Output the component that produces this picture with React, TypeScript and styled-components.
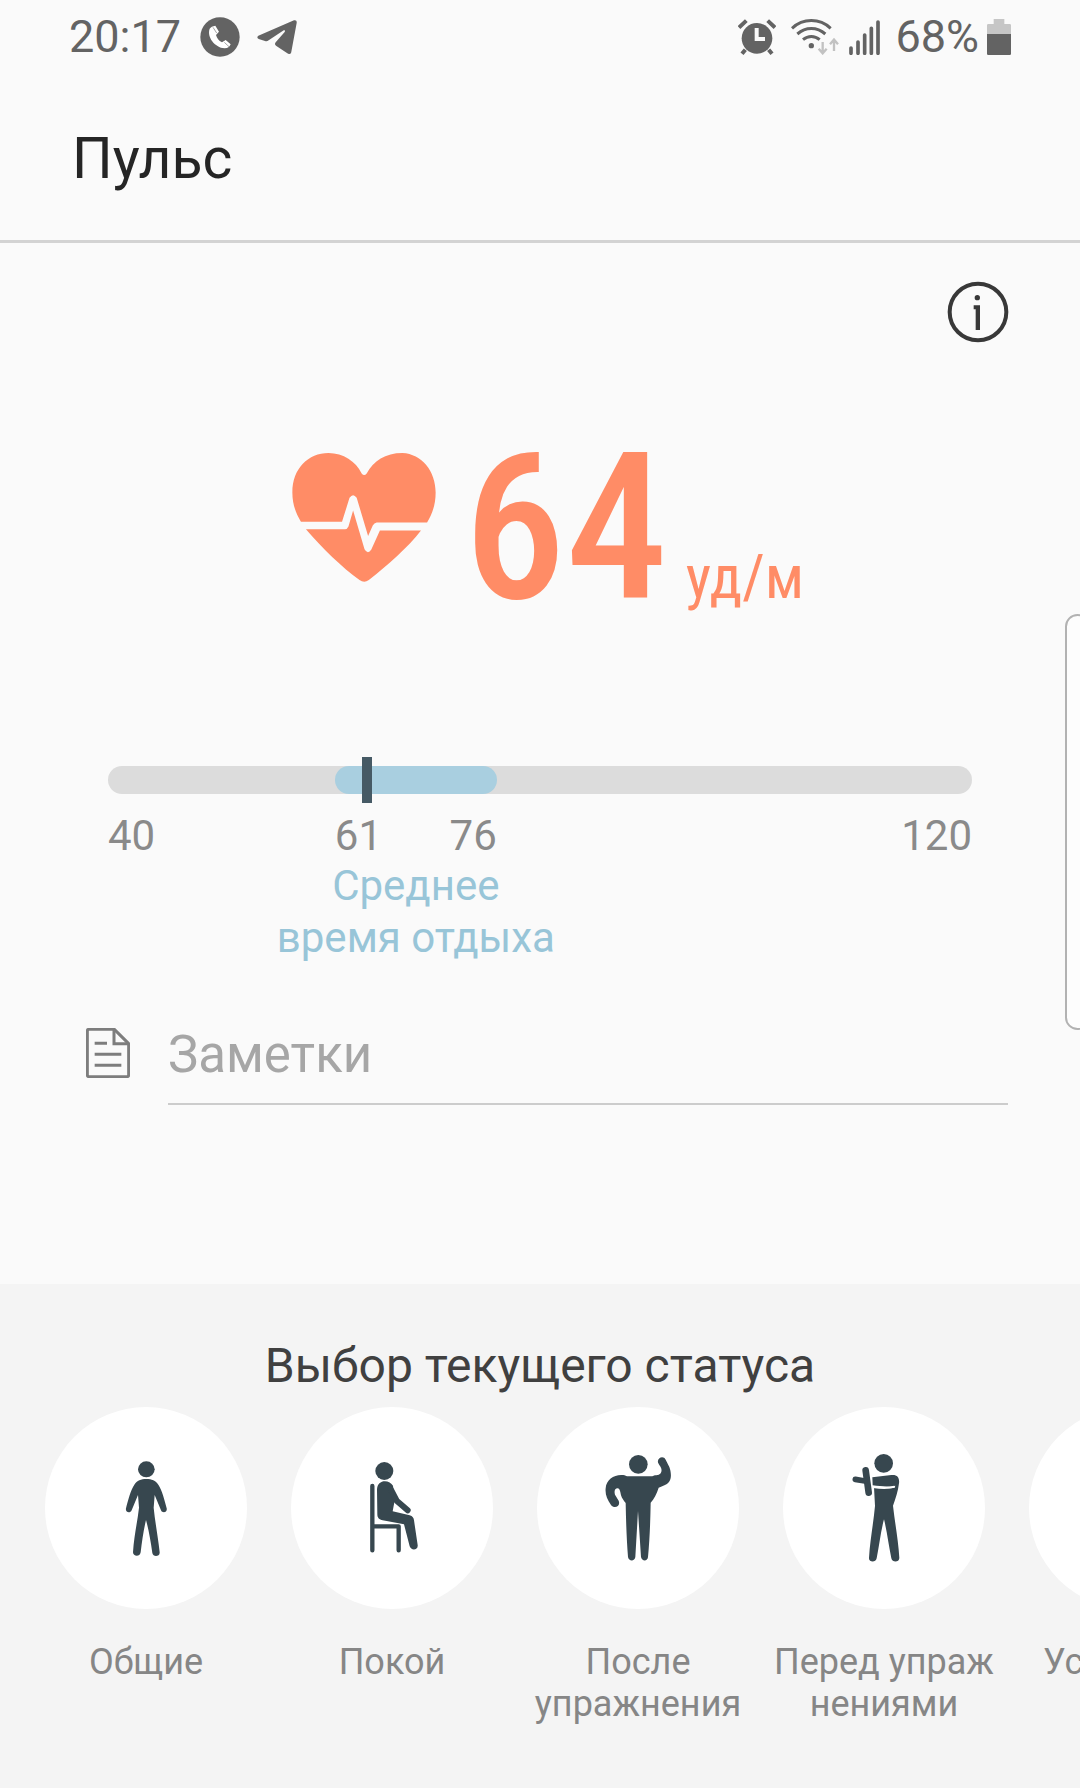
import React from "react";
import styled, { createGlobalStyle } from "styled-components";

const GlobalStyle = createGlobalStyle`
  *, *::before, *::after { box-sizing: border-box; }
  body {
    margin: 0;
    background: #fafafa;
    font-family: Roboto, "Noto Sans", sans-serif;
    overflow-x: hidden;
  }
  button, input { font: inherit; }
  h1, h2, p, ul { margin: 0; padding: 0; font-weight: 400; }
`;

const Screen = styled.div`
  position: relative;
  display: flex;
  flex-direction: column;
  min-height: 100vh;
  overflow: hidden;
  background: #fafafa;
`;

const StatusBar = styled.header`
  display: flex;
  justify-content: space-between;
  align-items: center;
  height: 74px;
  padding: 0 69px;
  font-size: 45px;
  line-height: 52px;
  color: #636363;
`;

const StatusGroup = styled.div`
  display: flex;
  align-items: center;
`;

const Glyph = styled.svg<{ $w: number; $h: number; $gap?: number }>`
  display: block;
  flex: none;
  width: ${(p) => p.$w}px;
  height: ${(p) => p.$h}px;
  margin-left: ${(p) => p.$gap ?? 0}px;
`;

const BatteryLevel = styled.span`
  margin-left: 14px;
`;

const TitleBar = styled.div`
  display: flex;
  align-items: center;
  height: 169px;
  padding: 3px 68px 0;
  border-bottom: 3px solid #d3d3d3;
`;

const Title = styled.h1`
  padding-left: 4px;
  font-size: 57px;
  line-height: 68px;
  color: #252525;
`;

const Main = styled.main`
  display: flex;
  flex-direction: column;
  padding: 37px 68px 179px;
`;

const InfoButton = styled.button`
  align-self: flex-end;
  display: block;
  padding: 0;
  margin-right: 2px;
  border: 0;
  background: none;
  cursor: pointer;
`;

const Reading = styled.div`
  display: flex;
  align-items: flex-start;
  justify-content: center;
  margin-top: 67px;
  padding-left: 16px;
  gap: 28px;
  color: #ff8c66;
`;

const HeartGlyph = styled(Glyph)`
  margin-top: 42px;
`;

const Beats = styled.p`
  display: flex;
  align-items: baseline;
  gap: 18px;
  font-family: "Roboto Condensed", "Liberation Sans Narrow", Roboto, sans-serif;
`;

const BeatsValue = styled.span`
  font-size: 204px;
  line-height: 236px;
  font-weight: 500;
`;

const BeatsUnit = styled.span`
  font-size: 61px;
  line-height: 72px;
`;

const RangeBlock = styled.section`
  margin: 119px 40px 0;
`;

const Track = styled.div`
  position: relative;
  height: 28px;
  border-radius: 14px;
  background: #dcdcdc;
`;

const RestingBand = styled.div`
  position: absolute;
  top: 0;
  bottom: 0;
  border-radius: 14px;
  background: #a9cfe0;
`;

const Marker = styled.div`
  position: absolute;
  top: -9px;
  bottom: -9px;
  width: 10px;
  margin-left: -5px;
  background: #465a65;
`;

const Scale = styled.div`
  display: grid;
  grid-template-columns: minmax(0, 21fr) minmax(0, 15fr) minmax(0, 44fr);
  margin-top: 18px;
  font-size: 42px;
  line-height: 48px;
  color: #8a8a8a;
`;

const ScaleCell = styled.div<{ $end?: boolean }>`
  display: flex;
  justify-content: ${(p) => (p.$end ? "flex-end" : "space-between")};
`;

const RestingLabel = styled.p`
  grid-column: 2;
  justify-self: center;
  width: max-content;
  line-height: 52px;
  text-align: center;
  color: #98c5d8;
`;

const NotesRow = styled.label`
  display: flex;
  align-items: flex-start;
  gap: 38px;
  margin: 53px 4px 0 18px;
`;

const NotesGlyph = styled(Glyph)`
  margin-top: 11px;
`;

const NotesInput = styled.input`
  flex: 1;
  min-width: 0;
  height: 88px;
  padding: 0 0 12px;
  border: 0;
  border-bottom: 2px solid #cccccc;
  border-radius: 0;
  outline: none;
  background: transparent;
  font-size: 51px;
  color: #252525;
  &::placeholder { color: #a6a6a6; opacity: 1; }
`;

const StatusPanel = styled.section`
  flex: 1;
  padding-top: 52px;
  background: #f4f4f4;
`;

const StatusTitle = styled.h2`
  font-size: 48px;
  line-height: 60px;
  text-align: center;
  color: #404040;
`;

const StatusList = styled.ul`
  display: flex;
  margin-top: 11px;
  padding-left: 23px;
  padding-bottom: 60px;
  list-style: none;
  overflow: hidden;
`;

const StatusOption = styled.button`
  display: flex;
  flex-direction: column;
  align-items: center;
  width: 246px;
  padding: 0;
  border: 0;
  background: none;
  font-size: 36px;
  line-height: 42px;
  color: #868686;
  cursor: pointer;
`;

const Disc = styled.span`
  display: flex;
  align-items: center;
  justify-content: center;
  width: 202px;
  height: 202px;
  margin-bottom: 32px;
  border-radius: 50%;
  background: #ffffff;
`;

const EdgeHandle = styled.div`
  position: absolute;
  top: 614px;
  right: -10px;
  width: 25px;
  height: 416px;
  border: 2px solid #b2b2b2;
  border-radius: 20px;
  background: #fdfdfd;
`;

const MIN = 40;
const MAX = 120;
const pct = (v: number) => ((v - MIN) / (MAX - MIN)) * 100;
const resting = { from: 61, to: 76 };
const bpm = 64;

const dark = "#37474f";

const Standing = () => (
  <Glyph $w={100} $h={130} viewBox="-10 8 300 390" fill={dark}>
    <ellipse cx="141" cy="87" rx="25" ry="24" />
    <path d="M141 116c16 0 28 5 36 17 11 17 18 44 25 71 3 13-13 16-17 6l-19-46-3 38c4 42 13 87 18 134 1 13-20 15-22 2-5-36-11-70-19-99-7 29-12 63-16 97-2 15-23 13-23 0 3-49 13-90 18-134l-3-38-19 46c-5 11-20 6-17-6 7-27 14-54 25-71 8-12 20-17 36-17z" />
  </Glyph>
);

const Sitting = () => (
  <Glyph $w={100} $h={130} viewBox="-22 8 300 390" fill={dark}>
    <circle cx="105" cy="92" r="27" />
    <path d="M69 137V330M69 258h79v72" fill="none" stroke={dark} strokeWidth="13" strokeLinecap="round" strokeLinejoin="round" />
    <path d="M83 149c0-34 38-32 48-13l4 50-5 27 51 12c9 2 12 8 13 15l11 74c2 16-20 18-24 4l-17-66-64-12c-10-2-16-7-16-18z" />
    <path d="M124 146l18 35 33 29" fill="none" stroke={dark} strokeWidth="18" strokeLinecap="round" strokeLinejoin="round" />
  </Glyph>
);

const Flexing = () => (
  <Glyph $w={100} $h={130} viewBox="-4 8 300 390" fill={dark}>
    <circle cx="147" cy="72" r="28" />
    <path d="M113 108h76c10-7 23 0 27-14 3-11-5-17-9-25-7-14 14-27 22-11l11 22c6 16 7 35-1 45-7 9-19 12-31 17-6 19-14 34-24 45-1 57-3 112-8 163-1 13-18 14-21 0l-9-138-8 138c-2 14-20 13-22 0-4-51-6-106-7-162-6-7-11-14-14-23-2-10-3-20-10-21-9 0-11 9-8 19l11 18c7 17-13 26-23 13-12-17-18-33-16-50 2-26 24-41 49-40 5 0 10 1 15 4z" />
  </Glyph>
);

const Stretching = () => (
  <Glyph $w={100} $h={130} viewBox="-16 8 300 390" fill={dark}>
    <circle cx="133" cy="69" r="28" />
    <path d="M99 111l57-7c19-2 25 9 23 25-3 25-10 45-18 67 6 54 16 104 19 157 0 13-21 15-24 1-8-40-13-80-22-117-10 37-14 77-22 117-3 14-24 12-23-1 3-53 13-102 18-156l-3-56c29 3 48 4 62 1l2-6c-18 4-41 3-68-1z" />
    <path d="M79 90l9 67" fill="none" stroke={dark} strokeWidth="20" strokeLinecap="round" />
    <path d="M48 117l29 5" fill="none" stroke={dark} strokeWidth="17" strokeLinecap="round" />
    <path d="M101 140c25 4 45 5 64-1" fill="none" stroke="#fff" strokeWidth="6" />
  </Glyph>
);

const options = [
  { lines: ["Общие"], art: <Standing /> },
  { lines: ["Покой"], art: <Sitting /> },
  { lines: ["После", "упражнения"], art: <Flexing /> },
  { lines: ["Перед упраж", "нениями"], art: <Stretching /> },
  { lines: ["Усталость"], art: null },
];

export default function App() {
  return (
    <Screen>
      <GlobalStyle />
      <StatusBar>
        <StatusGroup>
          <span>20:17</span>
          <Glyph $w={40} $h={40} $gap={19} viewBox="481 49 120 120">
            <circle cx="541" cy="109" r="59" fill="#636363" />
            <path d="M510 84c-9 25 15 56 45 59 10 0 14-4 18-12l-15-13-11 7c-10-5-15-13-18-22l9-10-11-18c-8 1-14 4-17 9z" fill="#fff" />
            <path d="M520 80l11 17M554 125l14 13" stroke="#777" strokeWidth="2" />
          </Glyph>
          <Glyph $w={40} $h={34} $gap={17} viewBox="652 62 120 102" fill="#636363">
            <path d="M656 109l107-46c6-2 9 2 8 8l-16 86c-1 7-6 9-12 5l-34-23c-4-3-4-6-1-10l27-31c3-5 0-7-5-4l-43 29c-4 3-7 3-11 2l-19-6c-5-2-5-7-1-10z" />
          </Glyph>
        </StatusGroup>
        <StatusGroup>
          <Glyph $w={38} $h={36} viewBox="54 54 114 108">
            <circle cx="111" cy="112" r="46" fill="#636363" />
            <path d="M57 80l22-21M143 59l22 21M76 146l-10 12M146 146l10 12" stroke="#636363" strokeWidth="12" />
            <path d="M110 81v33h25" fill="none" stroke="#fafafa" strokeWidth="12" />
          </Glyph>
          <Glyph $w={48} $h={36} $gap={15} viewBox="213 54 144 108" fill="none">
            <path d="M216 82c33-31 83-31 116 0M232 99c25-22 59-22 84 0M249 116c15-13 35-13 50 0" stroke="#636363" strokeWidth="9" />
            <circle cx="274" cy="134" r="8" fill="#636363" />
            <path d="M308 123v33M296 143l12 14 12-14M342 150v-33M330 130l12-14 12 14" stroke="#c2c2c2" strokeWidth="7" />
          </Glyph>
          <Glyph $w={32} $h={36} $gap={10} viewBox="385 55 96 108">
            <path d="M391 142v16M412 124v34M432 103v55M452 83v75M472 64v94" stroke="#636363" strokeWidth="11" strokeLinecap="round" />
          </Glyph>
          <BatteryLevel>68%</BatteryLevel>
          <Glyph $w={24} $h={36} $gap={8} viewBox="801 54 72 108">
            <path d="M821 54h32v15h16q4 0 4 4v26h-72V73q0-4 4-4h16z" fill="#c6c6c6" />
            <path d="M801 99h72v59q0 4-4 4h-64q-4 0-4-4z" fill="#636363" />
          </Glyph>
        </StatusGroup>
      </StatusBar>

      <TitleBar>
        <Title>Пульс</Title>
      </TitleBar>

      <Main>
        <InfoButton type="button" aria-label="Информация">
          <Glyph $w={64} $h={64} viewBox="79 60 192 192">
            <circle cx="175" cy="156" r="85" fill="none" stroke="#383838" strokeWidth="12" />
            <circle cx="173" cy="113" r="8" fill="#383838" />
            <path d="M162 136h19v74h-13v-62h-6z" fill="#383838" />
          </Glyph>
        </InfoButton>

        <Reading>
          <HeartGlyph $w={144} $h={129} viewBox="66 69 403 386" preserveAspectRatio="none" fill="currentColor">
            <path d="M91 275C76 247 67 222 67 187C67 115 112 69 168 69C210 69 244 94 261 130Q268 139 275 130C294 93 327 69 375 69C429 72 468 123 468 187C468 222 459 251 444 277H303Q296 278 292 286L279 317L247 203Q237 188 227 203L206 275Z" />
            <path d="M105 297H214Q221 297 224 289L237 241L269 357Q278 374 288 358L312 301H427C390 352 333 406 281 449Q268 459 255 449C206 411 150 353 105 297Z" />
          </HeartGlyph>
          <Beats>
            <BeatsValue>{bpm}</BeatsValue>
            <BeatsUnit>уд/м</BeatsUnit>
          </Beats>
        </Reading>

        <RangeBlock>
          <Track role="meter" aria-label="Пульс" aria-valuemin={MIN} aria-valuemax={MAX} aria-valuenow={bpm}>
            <RestingBand style={{ left: `${pct(resting.from)}%`, right: `${100 - pct(resting.to)}%` }} />
            <Marker style={{ left: `${pct(bpm)}%` }} />
          </Track>
          <Scale>
            <ScaleCell><span>{MIN}</span></ScaleCell>
            <ScaleCell><span>{resting.from}</span><span>{resting.to}</span></ScaleCell>
            <ScaleCell $end><span>{MAX}</span></ScaleCell>
            <RestingLabel>Среднее<br />время отдыха</RestingLabel>
          </Scale>
        </RangeBlock>

        <NotesRow>
          <NotesGlyph $w={44} $h={50} viewBox="78 84 132 150" fill="none" stroke="#7d7d7d" strokeWidth="9">
            <path d="M87 88h76l43 43v94q0 5-5 5H87q-5 0-5-5V93q0-5 5-5z" strokeLinejoin="round" />
            <path d="M162 89v42h43M104 130h37M104 163h80M104 196h80" />
          </NotesGlyph>
          <NotesInput type="text" placeholder="Заметки" aria-label="Заметки" />
        </NotesRow>
      </Main>

      <StatusPanel>
        <StatusTitle>Выбор текущего статуса</StatusTitle>
        <StatusList>
          {options.map((o) => (
            <li key={o.lines[0]}>
              <StatusOption type="button">
                <Disc>{o.art}</Disc>
                {o.lines.map((line) => (
                  <span key={line}>{line}</span>
                ))}
              </StatusOption>
            </li>
          ))}
        </StatusList>
      </StatusPanel>
      <EdgeHandle />
    </Screen>
  );
}
